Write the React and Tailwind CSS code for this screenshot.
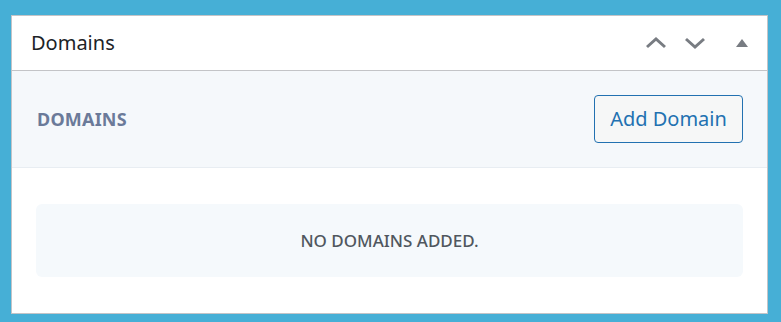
export default function App() {
  return (
    <div className="w-[781px] h-[322px] bg-[#46afd6] pl-[11px] pt-[15px] pr-[13px] pb-[8px]" style={{ fontFamily: '"Noto Sans", "Open Sans", sans-serif' }}>
      <div className="h-full bg-white border border-[#c3c4c7] flex flex-col">
        <div className="h-[55px] border-b border-[#c3c4c7] flex items-center pl-[19px] pr-[19px]">
          <div className="text-[20px] text-[#1d2327] flex-1 leading-none">Domains</div>
          <div className="flex items-center">
            <svg width="22" height="14" viewBox="0 0 22 14" className="mr-[17px]">
              <path d="M2 11 L11 3 L20 11" fill="none" stroke="#787c82" strokeWidth="3" />
            </svg>
            <svg width="22" height="14" viewBox="0 0 22 14" className="mr-[30px]">
              <path d="M2 3 L11 11 L20 3" fill="none" stroke="#787c82" strokeWidth="3" />
            </svg>
            <svg width="12" height="10" viewBox="0 0 12 10">
              <path d="M0 9 L6 1 L12 9 Z" fill="#787c82" />
            </svg>
          </div>
        </div>
        <div className="h-[97px] bg-[#f5f8fb] border-b border-[#e8edf2] flex items-center justify-between pl-[25px] pr-[24px]">
          <div className="text-[18px] font-bold text-[#6b7a99] tracking-[0.2px]">DOMAINS</div>
          <button className="w-[149px] h-[48px] border border-[#2271b1] rounded-[4px] bg-[#f6f7f7] text-[#2271b1] text-[20px]">Add Domain</button>
        </div>
        <div className="flex-1 pt-[36px] px-[24px]">
          <div className="h-[73px] rounded-[6px] bg-[#f5f9fc] flex items-center justify-center text-[17px] text-[#50575e] font-medium">
            NO DOMAINS ADDED.
          </div>
        </div>
      </div>
    </div>
  );
}
